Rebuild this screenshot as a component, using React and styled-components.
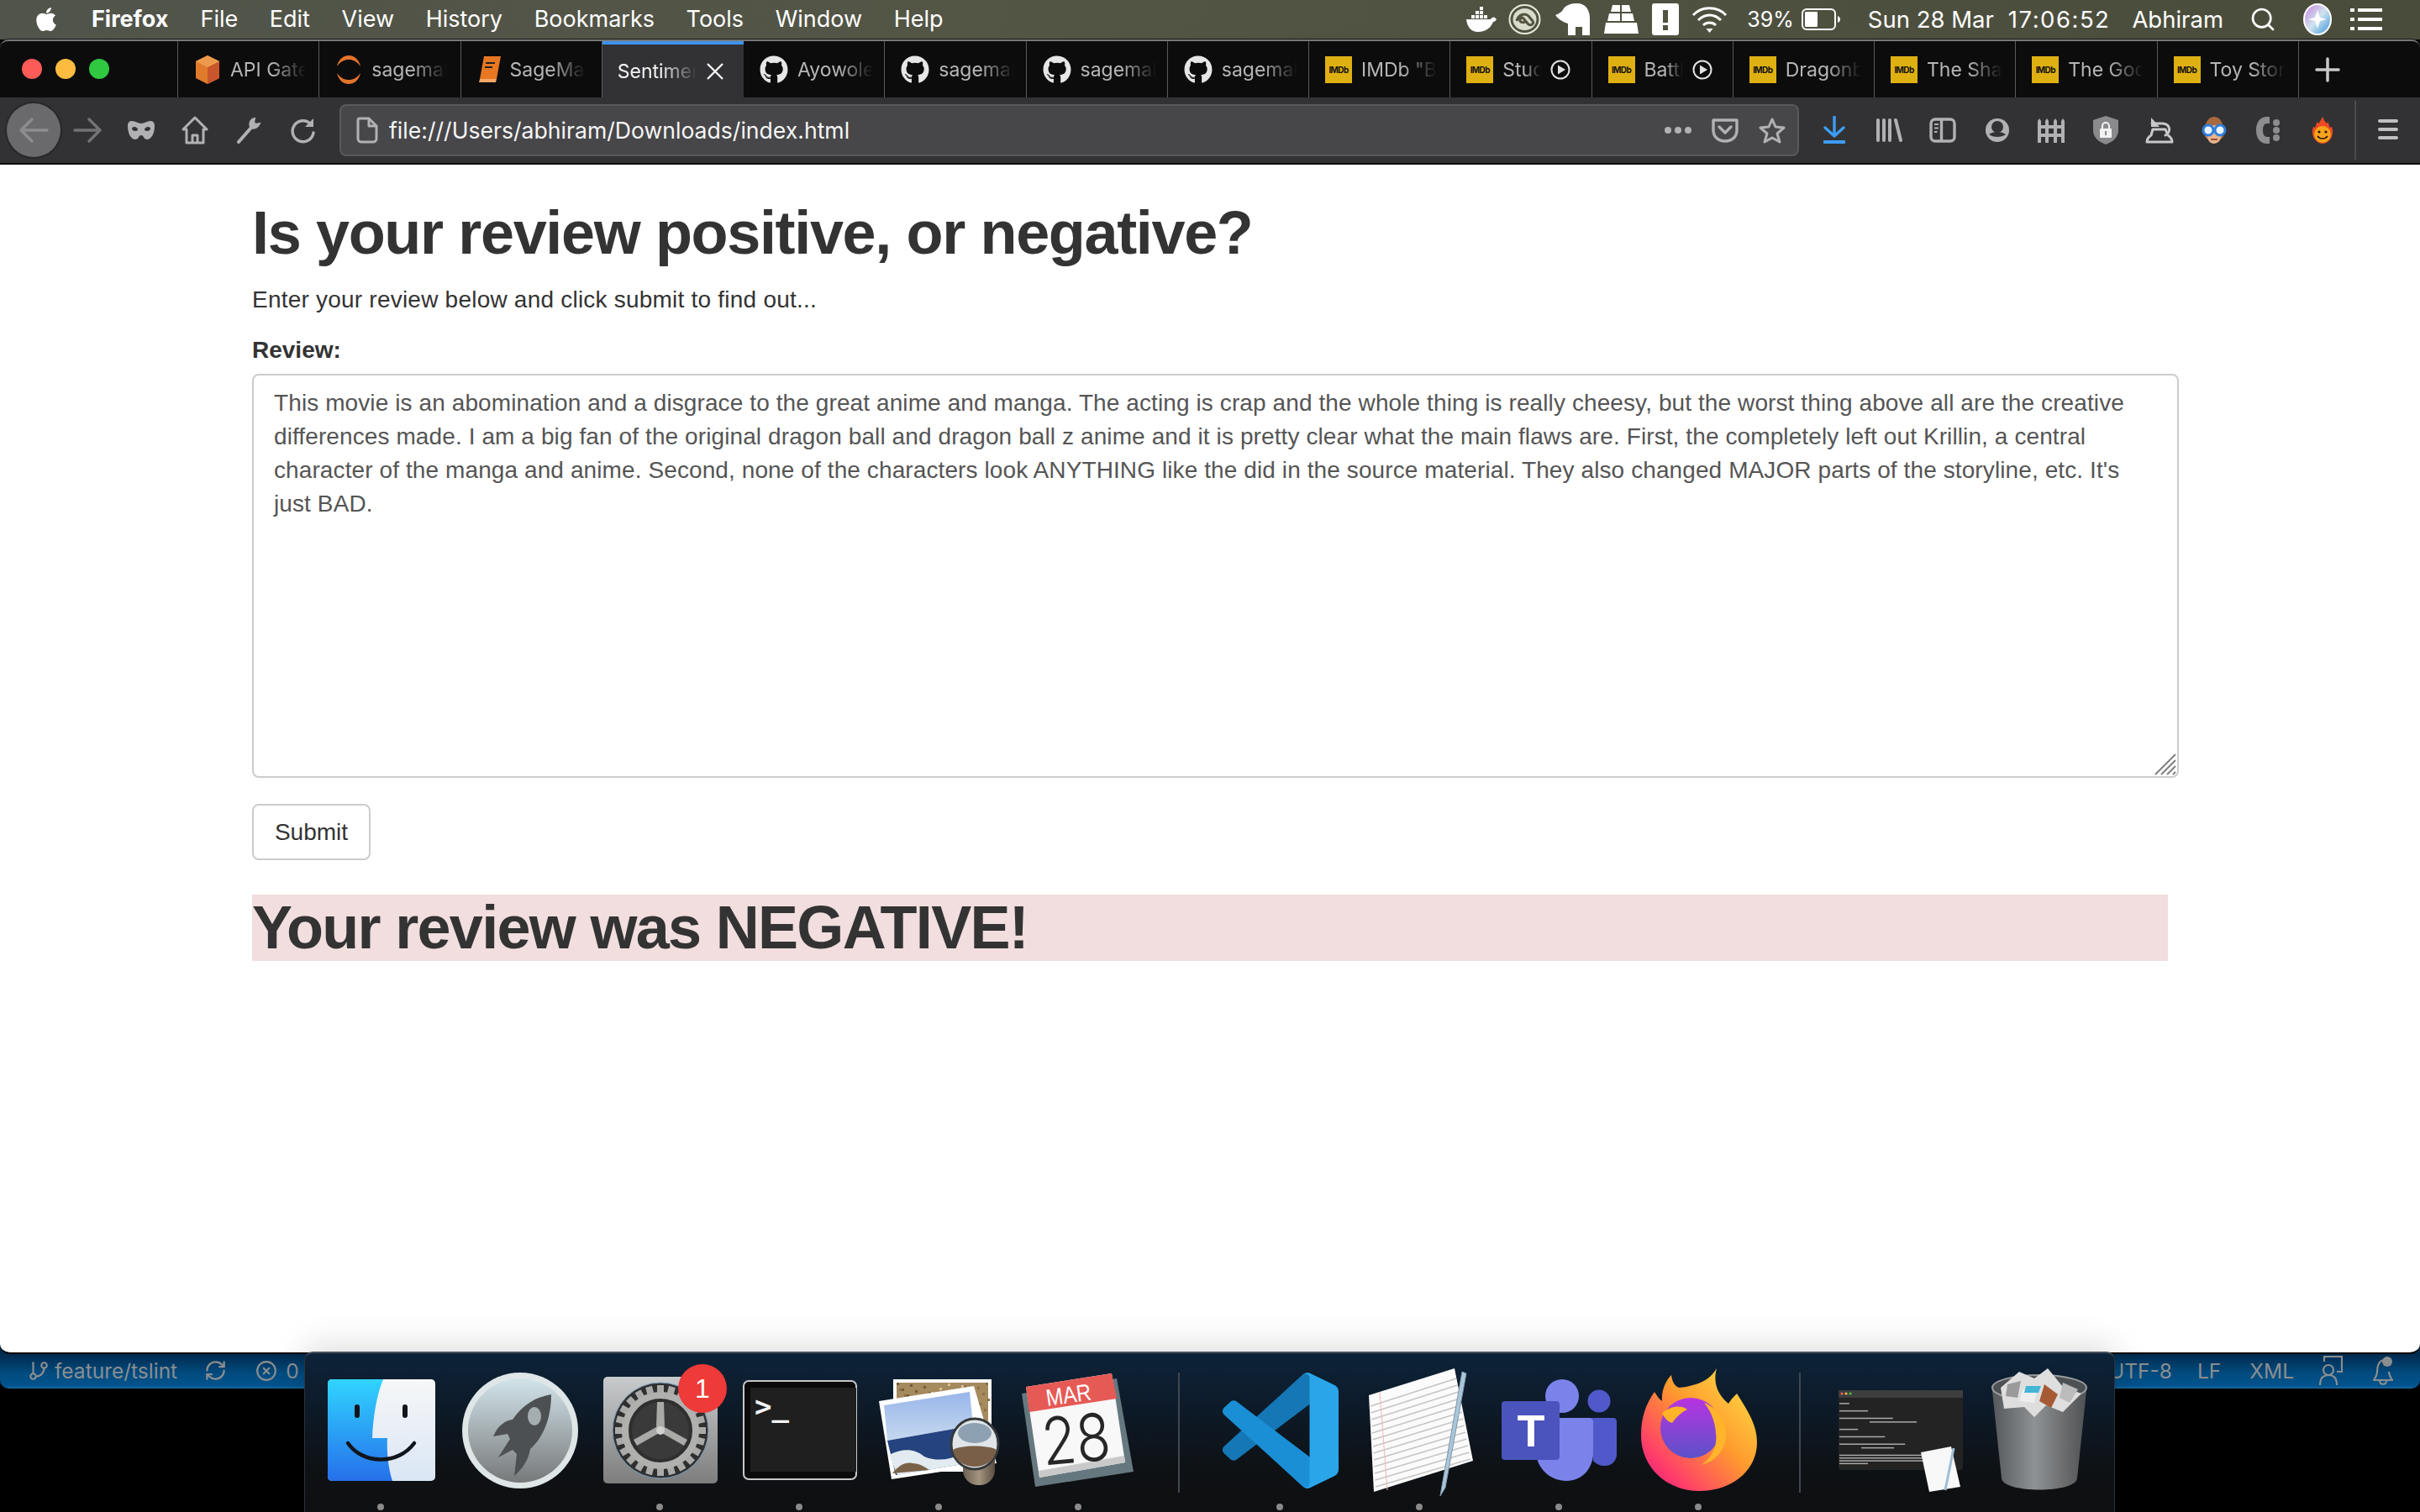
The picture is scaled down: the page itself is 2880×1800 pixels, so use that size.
import React from "react";
import styled, { createGlobalStyle } from "styled-components";
import { FaGithub, FaApple } from "react-icons/fa";
import { GitBranch, RefreshCw, CircleX, Search } from "lucide-react";

const GlobalStyle = createGlobalStyle`
  html, body { margin: 0; padding: 0; background: #000; }
  * { box-sizing: border-box; }
`;

const Screen = styled.div`
  width: 2880px;
  height: 1800px;
  background: #000;
  position: relative;
  overflow: hidden;
  display: flex;
  flex-direction: column;
  font-family: "Liberation Sans", Arial, sans-serif;
`;

/* mac menu bar */
const MenuBar = styled.div`
  height: 47px;
  flex: none;
  display: flex;
  align-items: center;
  padding: 0 45px 2px 39px;
  background: linear-gradient(90deg, #51544a 0%, #535544 45%, #4a4c3b 100%);
  color: #fff;
  font-family: Inter, "Liberation Sans", sans-serif;
  font-size: 27px;
`;
const MenuApp = styled.span`
  font-weight: 700;
  margin-left: 38px;
  margin-right: 38px;
`;
const MenuItem = styled.span`
  margin-right: 37.6px;
  white-space: nowrap;
`;
const MenuSpacer = styled.div`
  flex: 1;
`;
const Tray = styled.span`
  display: flex;
  align-items: center;
  margin-left: ${(p) => p.$ml || 0}px;
  white-space: nowrap;
  font-size: ${(p) => p.$size || 27.5}px;
  letter-spacing: ${(p) => p.$ls || 0}px;
`;

/* browser chrome */
const Chrome = styled.div`
  flex: none;
  border-top: 2px solid #777;
  border-radius: 10px 10px 0 0;
  background: #0c0c0d;
  box-shadow: 0 -1px 0 #1a1a1a;
`;
const TabStrip = styled.div`
  height: 67px;
  display: flex;
  align-items: stretch;
`;
const Lights = styled.div`
  width: 212px;
  display: flex;
  align-items: center;
  gap: 16px;
  padding: 0 0 2px 26px;
  border-right: 1px solid #5a5a5c;
`;
const Light = styled.span`
  width: 24px;
  height: 24px;
  border-radius: 50%;
  background: ${(p) => p.$c};
`;
const Tab = styled.div`
  width: 168.25px;
  flex: none;
  display: flex;
  align-items: center;
  gap: 11px;
  padding-left: ${(p) => (p.$active ? 18 : 19)}px;
  position: relative;
  background: ${(p) => (p.$active ? "#323234" : "transparent")};
  border-right: ${(p) => (p.$active ? "0" : "1px solid #5a5a5c")};
  border-top: ${(p) => (p.$active ? "4px solid #3d93f0" : "0")};
  color: ${(p) => (p.$active ? "#f4f4f4" : "#b6b6b8")};
  font-family: Inter, "Liberation Sans", sans-serif;
  font-size: 23px;
`;
const TabTitle = styled.span`
  width: ${(p) => p.$w || 88}px;
  overflow: hidden;
  white-space: nowrap;
  -webkit-mask-image: linear-gradient(90deg, #000 55%, transparent 100%);
  mask-image: linear-gradient(90deg, #000 55%, transparent 100%);
`;
const NewTab = styled.div`
  width: 68px;
  display: flex;
  align-items: center;
  justify-content: center;
`;
const Imdb = styled.span`
  width: 32px;
  height: 32px;
  flex: none;
  background: #dfb011;
  color: #111;
  font-size: 10px;
  font-weight: 700;
  display: flex;
  align-items: center;
  justify-content: center;
  letter-spacing: -0.6px;
`;

const Toolbar = styled.div`
  height: 80px;
  background: #323234;
  border-bottom: 2px solid #0c0c0d;
  display: flex;
  align-items: center;
  padding-left: 8px;
`;
const ToolSlot = styled.div`
  width: ${(p) => p.$w || 64}px;
  height: 64px;
  flex: none;
  display: flex;
  align-items: center;
  justify-content: center;
`;
const BackButton = styled.div`
  width: 64px;
  height: 64px;
  flex: none;
  border-radius: 50%;
  background: #6a6a6c;
  box-shadow: 0 0 0 2px #28282a;
  display: flex;
  align-items: center;
  justify-content: center;
`;
const UrlBar = styled.div`
  flex: 1;
  height: 62px;
  margin: 0 10px 0 12px;
  background: #474749;
  border: 2px solid #59595b;
  border-radius: 8px;
  display: flex;
  align-items: center;
  padding: 0 14px 0 18px;
  color: #f6f6f6;
  font-family: Inter, "Liberation Sans", sans-serif;
  font-size: 26.6px;
`;
const UrlText = styled.span`
  flex: 1;
  margin-left: 13px;
`;
const UrlActions = styled.div`
  display: flex;
  align-items: center;
  gap: 24px;
`;
const ToolDivider = styled.div`
  width: 2px;
  height: 70px;
  background: #4c4c4e;
  margin-left: 6px;
`;

/* the page itself */
const Page = styled.main`
  height: 1416px;
  flex: none;
  position: relative;
  z-index: 1;
  background: #fff;
  border-bottom: 2px solid #000;
  border-radius: 0 0 12px 12px;
  padding: 42px 0 0 300px;
  color: #333;
`;
const Title = styled.h1`
  margin: 0 0 20px;
  font-size: 72px;
  line-height: 79px;
  font-weight: 700;
  letter-spacing: ${(p) => p.$ls}px;
`;
const Lead = styled.p`
  margin: 0 0 20px;
  font-size: 28px;
  line-height: 40px;
  letter-spacing: 0.22px;
`;
const FieldLabel = styled.label`
  display: block;
  margin: 0 0 8px;
  font-size: 28px;
  line-height: 40px;
  font-weight: 700;
`;
const FieldWrap = styled.div`
  position: relative;
  width: 2293px;
  height: 481px;
  margin-bottom: 31px;
`;
const Review = styled.textarea`
  display: block;
  width: 100%;
  height: 100%;
  resize: none;
  outline: none;
  border: 2px solid #ccc;
  border-radius: 8px;
  padding: 13px 34px 13px 24px;
  background: #fff;
  color: #555;
  font-family: "Liberation Sans", Arial, sans-serif;
  font-size: 28px;
  line-height: 40px;
  letter-spacing: 0.1px;
  overflow: hidden;
`;
const Grip = styled.svg`
  position: absolute;
  right: 3px;
  bottom: 3px;
`;
const SubmitButton = styled.button`
  display: block;
  width: 141px;
  height: 67px;
  background: #fff;
  border: 2px solid #ccc;
  border-radius: 8px;
  color: #333;
  font-family: "Liberation Sans", Arial, sans-serif;
  font-size: 28px;
  padding: 0 0 0 0;
`;
const Result = styled(Title)`
  margin: 41px 0 0;
  width: 2280px;
  background: #f2dede;
`;

/* the editor's status bar peeking out behind the window */
const StatusBar = styled.div`
  flex: none;
  height: 53px;
  margin-top: -12px;
  padding: 12px 32px 2px 33px;
  border-radius: 0 0 10px 10px;
  background: linear-gradient(180deg, #012440 0%, #012c50 25%, #014a7e 65%, #01548e 95%, #1a6ca4 100%);
  color: #8a8e90;
  font-family: Inter, "Liberation Sans", sans-serif;
  font-size: 24.5px;
  display: flex;
  align-items: center;
`;
const StatusItem = styled.span`
  display: flex;
  align-items: center;
  gap: ${(p) => p.$gap || 10}px;
  margin-left: ${(p) => p.$ml || 0}px;
  white-space: nowrap;
`;
const StatusSpacer = styled.div`
  flex: 1;
`;

/* dock */
const Dock = styled.div`
  position: absolute;
  left: 362px;
  top: 1609px;
  width: 2155px;
  height: 191px;
  padding: 13px 0 0 7px;
  display: flex;
  z-index: 2;
  border-top: 2px solid #46525e;
  border-left: 1px solid #2c343c;
  border-right: 1px solid #2c343c;
  border-radius: 10px 10px 0 0;
  background: linear-gradient(180deg, #0d2339 0%, #0d1a28 35%, #0e1114 75%, #0e0f11 100%);
  box-shadow: 0 -6px 40px rgba(0, 0, 0, 0.14);
`;
const DockSlot = styled.div`
  width: 166px;
  flex: none;
  position: relative;
  display: flex;
  flex-direction: column;
  align-items: center;
`;
const RunDot = styled.span`
  width: 8px;
  height: 8px;
  margin-top: 6px;
  border-radius: 50%;
  background: ${(p) => (p.$on ? "#8a8a8a" : "transparent")};
`;
const DockSep = styled.div`
  width: ${(p) => p.$w}px;
  flex: none;
  display: flex;
  justify-content: center;
  &::after {
    content: "";
    width: 2px;
    height: 143px;
    margin-top: 10px;
    background: #3f4750;
  }
`;
const Badge = styled.span`
  position: absolute;
  left: 105px;
  top: 0;
  width: 58px;
  height: 58px;
  border-radius: 50%;
  background: #ee3a38;
  color: #fff;
  font-size: 32px;
  display: flex;
  align-items: center;
  justify-content: center;
`;

const Cube = () => (
  <svg width="32" height="34" viewBox="0 0 32 34">
    <path d="M16 0 30 7v20l-14 7L2 27V7z" fill="#e07b2c" />
    <path d="M16 14 30 7v20l-14 7z" fill="#c9562a" />
    <path d="M16 0 30 7 16 14 2 7z" fill="#ee9a4d" />
  </svg>
);
const SageRing = () => (
  <svg width="32" height="36" viewBox="0 0 32 36">
    <path d="M2 14C4 5 10 1 16 1s12 4 14 13C25 7 20 6 16 6S7 7 2 14z" fill="#e4732a" />
    <path d="M2 22c2 9 8 13 14 13s12-4 14-13c-5 7-10 8-14 8S7 29 2 22z" fill="#e4732a" />
  </svg>
);
const Book = () => (
  <svg width="28" height="32" viewBox="0 0 28 32">
    <path d="M8 0h20l-5 27H3z" fill="#e87722" />
    <path d="M3 27h20l-1 4H2z" fill="#f2a766" />
    <path d="M10 7h11v2H10zM9 12h9v2H9z" fill="#222" />
  </svg>
);
const PlayCircle = () => (
  <svg width="24" height="24" viewBox="0 0 24 24" fill="none">
    <circle cx="12" cy="12" r="10.5" stroke="#e2e2e2" strokeWidth="2" />
    <path d="M9 6.5 18 12l-9 5.5z" fill="#e2e2e2" />
  </svg>
);

const tabs = [
  { icon: <Cube />, title: "API Gate" },
  { icon: <SageRing />, title: "sagemal" },
  { icon: <Book />, title: "SageMa" },
  { title: "Sentimen", active: true },
  { git: true, title: "Ayowole" },
  { git: true, title: "sagemal" },
  { git: true, title: "sagemal" },
  { git: true, title: "sagemal" },
  { imdb: true, title: 'IMDb "B' },
  { imdb: true, title: "Stud", play: true },
  { imdb: true, title: "Battl", play: true },
  { imdb: true, title: "Dragonb" },
  { imdb: true, title: "The Sha" },
  { imdb: true, title: "The God" },
  { imdb: true, title: "Toy Stor" },
];

const ico = "#b1b1b3";

const reviewText =
  "This movie is an abomination and a disgrace to the great anime and manga. The acting is crap and the whole thing is really cheesy, but the worst thing above all are the creative differences made. I am a big fan of the original dragon ball and dragon ball z anime and it is pretty clear what the main flaws are. First, the completely left out Krillin, a central character of the manga and anime. Second, none of the characters look ANYTHING like the did in the source material. They also changed MAJOR parts of the storyline, etc. It's just BAD.";

function DockIcon({ children }) {
  return (
    <svg width="166" height="160" viewBox="0 0 166 160">
      {children}
    </svg>
  );
}

const Finder = () => (
  <DockIcon>
    <defs>
      <linearGradient id="fa" x1="0" y1="0" x2="0" y2="1">
        <stop offset="0" stopColor="#30d4ff" />
        <stop offset="1" stopColor="#2670ea" />
      </linearGradient>
      <linearGradient id="fb" x1="0" y1="0" x2="0" y2="1">
        <stop offset="0" stopColor="#f6f7f8" />
        <stop offset="1" stopColor="#dae6f4" />
      </linearGradient>
    </defs>
    <rect x="20" y="18" width="128" height="121" rx="5" fill="url(#fb)" />
    <path d="M25 18h61c-8 20-12 45-13 70h18c-1 16 1 36 6 51H25a5 5 0 0 1-5-5V23a5 5 0 0 1 5-5z" fill="url(#fa)" />
    <rect x="52" y="48" width="6" height="16" rx="3" fill="#10151c" />
    <rect x="109" y="48" width="6" height="16" rx="3" fill="#10151c" />
    <path d="M44 94C62 120 104 120 123 94" fill="none" stroke="#10151c" strokeWidth="4.5" strokeLinecap="round" />
  </DockIcon>
);

const Launchpad = () => (
  <DockIcon>
    <defs>
      <linearGradient id="la" x1="0" y1="0" x2="0" y2="1">
        <stop offset="0" stopColor="#d2e4ea" />
        <stop offset="1" stopColor="#77797a" />
      </linearGradient>
    </defs>
    <circle cx="83" cy="79" r="69" fill="#dfe6e8" />
    <circle cx="83" cy="79" r="62" fill="url(#la)" />
    <path d="M120 36c-18 3-34 12-46 30-8 1-17 6-23 20l17-3 3 6-14 22 17-9 5 5-3 26c8-7 17-18 19-32 15-13 25-36 25-65z" fill="#4d5052" />
    <ellipse cx="100" cy="62" rx="8" ry="11" fill="#a4adb0" />
  </DockIcon>
);

const gearTeeth = Array.from({ length: 24 }, (_, i) => i * 15);
const SysPrefs = () => (
  <DockIcon>
    <defs>
      <linearGradient id="sa" x1="0" y1="0" x2="0" y2="1">
        <stop offset="0" stopColor="#c8cbcd" />
        <stop offset="1" stopColor="#7d7d7d" />
      </linearGradient>
    </defs>
    <rect x="16" y="15" width="136" height="127" rx="5" fill="url(#sa)" />
    <circle cx="84" cy="79" r="57" fill="#2f2f30" stroke="#7fa3bd" strokeWidth="1" />
    {gearTeeth.map((a) => (
      <rect key={a} x="80" y="25" width="8" height="14" fill="#aaaaa8" transform={`rotate(${a} 84 79)`} />
    ))}
    <circle cx="84" cy="79" r="42" fill="none" stroke="#b0b0ae" strokeWidth="8" />
    <circle cx="84" cy="79" r="34" fill="#3a3a3b" />
    <path d="M80 45h8l1 30 27 15-4 7-28-16-28 16-4-7 27-15z" fill="#a9a9a7" />
    <circle cx="84" cy="79" r="5" fill="#d0d0ce" />
  </DockIcon>
);

const Terminal = () => (
  <DockIcon>
    <rect x="17" y="20" width="134" height="117" rx="6" fill="#0a0a0a" stroke="#c8c8c8" strokeWidth="2" />
    <rect x="25" y="28" width="126" height="100" fill="#1f1f1f" />
    <text x="30" y="62" fill="#f5f5f5" fontFamily="'DejaVu Sans Mono', monospace" fontWeight="700" fontSize="34">
      {">_"}
    </text>
  </DockIcon>
);

const speckles = Array.from({ length: 70 }, (_, i) => ({
  x: 33 + ((i * 37) % 109),
  y: 22 + ((i * 23) % 50),
  c: i % 3 === 0 ? "#6f5a3a" : i % 3 === 1 ? "#d6bf93" : "#8a7048",
}));
const Preview = () => (
  <DockIcon>
    <defs>
      <linearGradient id="pa" x1="0" y1="0" x2="0" y2="1">
        <stop offset="0" stopColor="#98b6ea" />
        <stop offset="1" stopColor="#c6d8ef" />
      </linearGradient>
      <linearGradient id="pb" x1="0" y1="0" x2="1" y2="0">
        <stop offset="0" stopColor="#6c6052" />
        <stop offset="0.5" stopColor="#a39480" />
        <stop offset="1" stopColor="#5a4e42" />
      </linearGradient>
    </defs>
    <rect x="29" y="18" width="117" height="110" fill="#fff" />
    <rect x="33" y="22" width="109" height="100" fill="#a58a5e" />
    {speckles.map((s, i) => (
      <rect key={i} x={s.x} y={s.y} width="3" height="3" fill={s.c} />
    ))}
    <path d="M12 44 125 26l27 92-125 19z" fill="#fff" />
    <path d="M18 49 120 33l4 40-102 18z" fill="url(#pa)" />
    <path d="M22 91 124 73l12 42-104 17z" fill="#25437f" />
    <path d="M24 108c16-8 30-8 42 2 14 6 30 4 42-2l22 8-96 16z" fill="#e2ebf0" />
    <path d="M28 130c8-10 16-14 24-12 8 0 14 4 20 8z" fill="#7a6248" />
    <rect x="112" y="92" width="38" height="52" rx="18" fill="url(#pb)" />
    <ellipse cx="126" cy="95" rx="28" ry="30" fill="#dfe5e8" stroke="#34383b" strokeWidth="3" />
    <path d="M100 102c8-6 44-6 52 0-2 12-12 20-26 20s-24-8-26-20z" fill="#7a5f48" />
    <ellipse cx="126" cy="82" rx="20" ry="12" fill="#8ea1b2" />
  </DockIcon>
);

const Calendar = () => (
  <DockIcon>
    <path d="M16 35 129 17l20 111-117 18z" fill="#66787f" />
    <path d="M21 27 123 11l16 106-102 18z" fill="#f8f8f8" />
    <path d="M37 135 139 117l-1-8-102 18z" fill="#c9c9c9" />
    <path d="M21 27 123 11l6 30L25 57z" fill="#e65a56" />
    <text x="73" y="46" textAnchor="middle" fill="#fff" fontFamily="'Liberation Sans', sans-serif" fontSize="28" textLength="54" lengthAdjust="spacingAndGlyphs" transform="rotate(-8 73 46)">
      MAR
    </text>
    <text x="83" y="117" textAnchor="middle" fill="#262626" fontFamily="Inter, sans-serif" fontWeight="300" fontSize="78" textLength="82" lengthAdjust="spacingAndGlyphs" transform="rotate(-5 83 117)">
      28
    </text>
  </DockIcon>
);

const VsCode = () => (
  <DockIcon>
    <g transform="translate(15 10) scale(1.38)">
      <path d="M96.46 10.8 75.86.88C73.47-.27 70.62.21 68.75 2.08L1.3 63.58c-1.81 1.66-1.81 4.51 0 6.16l5.51 5.01c1.49 1.35 3.72 1.45 5.32.24L93.36 13.37C96.09 11.3 100 13.25 100 16.67v-.24c0-2.4-1.38-4.59-3.54-5.63z" fill="#1577b5" />
      <path d="M96.46 89.2 75.86 99.12c-2.39 1.15-5.24.67-7.11-1.2L1.3 36.42c-1.81-1.66-1.81-4.51 0-6.16l5.51-5.01c1.49-1.35 3.72-1.45 5.32-.24l81.23 61.62c2.73 2.07 6.64.12 6.64-3.3v.24c0 2.4-1.38 4.59-3.54 5.63z" fill="#1a8fd6" />
      <path d="M75.86 99.13c-2.39 1.15-5.24.66-7.11-1.21C71.06 100.22 75 98.59 75 95.33V4.67c0-3.26-3.94-4.89-6.25-2.59C70.62.21 73.47-.27 75.86.87l20.6 9.91C98.62 11.82 100 14.01 100 16.41v67.18c0 2.4-1.38 4.59-3.54 5.63z" fill="#2aa5ea" />
    </g>
  </DockIcon>
);

const TextEdit = () => (
  <DockIcon>
    <path d="M23 37 125 5l22 110-118 37z" fill="#fbfbfb" />
    {Array.from({ length: 13 }, (_, i) => i).map((i) => (
      <path key={i} d={`M${25 + i * 0.5} ${50 + i * 8} ${127 + i * 1.4} ${17 + i * 8}`} stroke="#c4c4c4" strokeWidth="1.4" />
    ))}
    <path d="M36 33 45 150" stroke="#f3b8b8" strokeWidth="1" />
    <path d="M134 9 110 145l-2 12 6-10 25-136z" fill="#a9c6da" stroke="#7f97a8" strokeWidth="1" />
  </DockIcon>
);

const Teams = () => (
  <DockIcon>
    <circle cx="87" cy="38" r="20" fill="#7b83eb" />
    <circle cx="131" cy="44" r="13.5" fill="#5059c9" />
    <path d="M118 64h30c3 0 4 2 4 5v38c0 8-6 14-14 14-6 0-10-2-14-6z" fill="#5059c9" />
    <path d="M62 64h56c4 0 6 2 6 5v36c0 19-13 34-32 34-18 0-36-14-36-36z" fill="#7b83eb" />
    <rect x="15" y="44" width="69" height="70" rx="4" fill="#4b53bc" />
    <text x="50" y="98" textAnchor="middle" fill="#fff" fontFamily="'Liberation Sans', sans-serif" fontWeight="700" fontSize="54">
      T
    </text>
  </DockIcon>
);

const Firefox = () => (
  <DockIcon>
    <defs>
      <linearGradient id="xa" x1="1" y1="0" x2="0" y2="1">
        <stop offset="0" stopColor="#ffe847" />
        <stop offset="0.45" stopColor="#ff9a2e" />
        <stop offset="0.8" stopColor="#ff3d6a" />
        <stop offset="1" stopColor="#e31587" />
      </linearGradient>
      <linearGradient id="xb" x1="0.5" y1="0" x2="0.5" y2="1">
        <stop offset="0" stopColor="#b833e1" />
        <stop offset="1" stopColor="#5b52c8" />
      </linearGradient>
    </defs>
    <path d="M105 5c-5 18 2 32 14 42 4-6 6-8 10-12 14 22 24 38 24 58 0 34-30 58-69 58-38 0-69-28-69-66 0-22 6-38 16-52 3 5 6 9 9 11-1-12 4-24 11-31 1 8 4 13 9 15 18-2 36-7 45-23z" fill="url(#xa)" />
    <circle cx="74" cy="76" r="36" fill="url(#xb)" />
    <path d="M40 58c10-8 22-10 30-4-8 4-14 10-18 16-6-2-9-6-12-12z" fill="#ffb326" />
    <path d="M90 46c16 6 26 22 26 38 0 18-12 32-30 36 14-9 20-22 18-38-1-14-6-26-14-36z" fill="#ffb42c" />
  </DockIcon>
);

const thumbLines = [
  [14, 22, 14], [14, 38, 40], [14, 54, 75], [50, 62, 66], [14, 78, 26], [14, 94, 64], [14, 110, 92],
  [40, 118, 46], [14, 134, 140], [14, 140, 135], [14, 146, 138], [14, 152, 40],
];
const DocThumb = () => (
  <DockIcon>
    <rect x="9" y="31" width="148" height="95" rx="3" fill="#232323" />
    <rect x="9" y="31" width="148" height="9" fill="#3d3d3d" />
    <circle cx="13" cy="35" r="1.6" fill="#ee5f58" />
    <circle cx="18" cy="35" r="1.6" fill="#f6bd3a" />
    <circle cx="23" cy="35" r="1.6" fill="#3fc94e" />
    {thumbLines.map(([x, y, w]) => (
      <rect key={y} x={x - 4} y={34 + y * 0.55} width={w * 0.85} height="1.5" fill="#a9a9a9" />
    ))}
    <path d="M107 105 143 98l11 48-37 6z" fill="#f8f8f8" />
    <path d="M146 100 136 150" stroke="#9fbfd6" strokeWidth="3" />
  </DockIcon>
);

const Trash = () => (
  <DockIcon>
    <defs>
      <linearGradient id="ta" x1="0" y1="0" x2="1" y2="0">
        <stop offset="0" stopColor="#55585a" />
        <stop offset="0.45" stopColor="#8f9294" />
        <stop offset="1" stopColor="#4f5153" />
      </linearGradient>
    </defs>
    <path d="M26 32c0-10 112-10 112 0l-11 104c-2 18-88 18-90 0z" fill="url(#ta)" />
    <ellipse cx="82" cy="28" rx="56" ry="15" fill="#4e5153" stroke="#9a9da0" strokeWidth="2" />
    <path d="M36 28 58 9l18 8 16-12 18 22 22 8-22 22-20-8-14 14-12-12-24 2z" fill="#dedede" />
    <path d="M62 30 80 26 76 46 58 44z" fill="#eee" />
    <path d="M66 26h18l-3 8H64z" fill="#45b5d6" />
    <path d="M88 24 104 36 96 52 82 44z" fill="#a65a33" />
    <path d="M44 24 60 20 56 40 42 38z" fill="#9a9a9a" />
    <path d="M110 22 128 30 118 46 106 40z" fill="#bcbcbc" />
  </DockIcon>
);

function App() {
  return (
    <Screen>
      <GlobalStyle />
      <MenuBar>
        <FaApple size={32} color="#fff" />
        <MenuApp>Firefox</MenuApp>
        <MenuItem>File</MenuItem>
        <MenuItem>Edit</MenuItem>
        <MenuItem>View</MenuItem>
        <MenuItem>History</MenuItem>
        <MenuItem>Bookmarks</MenuItem>
        <MenuItem>Tools</MenuItem>
        <MenuItem>Window</MenuItem>
        <MenuItem>Help</MenuItem>
        <MenuSpacer />
        <Tray>
          <svg width="36" height="30" viewBox="0 0 36 30" fill="#fff">
            <path d="M16 0h4v4h-4zM11 5h4v4h-4zM16 5h4v4h-4zM6 10h4v4H6zM11 10h4v4h-4zM16 10h4v4h-4zM21 10h4v4h-4z" />
            <path d="M0 15h29c1-2 3-3 5-2l2 2c-1 2-3 3-4 3-3 8-10 12-18 12C6 30 1 24 0 15z" />
          </svg>
        </Tray>
        <Tray $ml={14}>
          <svg width="39" height="36" viewBox="0 0 39 36" fill="none">
            <ellipse cx="19.5" cy="18" rx="18" ry="17" stroke="#e8e8dc" strokeWidth="2" />
            <ellipse cx="19.5" cy="18" rx="14" ry="13" fill="#d9dbcc" />
            <path d="M10 20c2-8 10-10 14-6l5 6c2 3-2 6-5 4l-6-7c-2-2-5 0-4 3 1 2 5 2 6 1" stroke="#52543f" strokeWidth="3" />
          </svg>
        </Tray>
        <Tray $ml={17}>
          <svg width="41" height="38" viewBox="0 0 41 38" fill="#fff">
            <path d="M0 14c5-2 8-4 10-8 4-5 10-6 16-6 10 0 15 8 15 18v20h-9V28h-8v10h-9V24C8 22 3 18 0 14z" />
          </svg>
        </Tray>
        <Tray $ml={17}>
          <svg width="41" height="34" viewBox="0 0 41 34" fill="#fff">
            <path d="M10 0h9v8H8zM21 0h9l2 8H21zM6 10h13v9H4zM21 10h13l2 9H21zM2 21h37l2 13H0z" />
          </svg>
        </Tray>
        <Tray $ml={16}>
          <svg width="32" height="38" viewBox="0 0 32 38">
            <rect width="32" height="38" rx="3" fill="#fff" />
            <rect x="13" y="8" width="6" height="15" fill="#52543f" />
            <rect x="13" y="26" width="6" height="6" fill="#52543f" />
          </svg>
        </Tray>
        <Tray $ml={15}>
          <svg width="43" height="32" viewBox="0 0 43 32" fill="none" stroke="#fff" strokeWidth="3">
            <path d="M2 11C12 0 31 0 41 11" />
            <path d="M8 17c8-8 19-8 27 0" />
            <path d="M14 23c4-4 11-4 15 0" />
            <path d="M21.5 32l-4-5h8z" fill="#fff" stroke="none" />
          </svg>
        </Tray>
        <Tray $ml={23} $size={25}>39%</Tray>
        <Tray $ml={9}>
          <svg width="46" height="26" viewBox="0 0 46 26" fill="none">
            <rect x="1" y="1" width="39" height="24" rx="5" stroke="#fff" strokeWidth="2" />
            <rect x="4" y="4" width="15" height="18" rx="1" fill="#fff" />
            <path d="M43 9c2 1 3 2 3 4s-1 3-3 4z" fill="#fff" />
          </svg>
        </Tray>
        <Tray $ml={33}>Sun 28 Mar</Tray>
        <Tray $ml={17} $ls={1.5}>17:06:52</Tray>
        <Tray $ml={26}>Abhiram</Tray>
        <Tray $ml={31}>
          <Search size={32} color="#fff" strokeWidth={2} />
        </Tray>
        <Tray $ml={32}>
          <svg width="34" height="38" viewBox="0 0 34 38">
            <defs>
              <linearGradient id="si" x1="0" y1="0" x2="1" y2="1">
                <stop offset="0" stopColor="#c97be0" />
                <stop offset="0.5" stopColor="#cfe4ef" />
                <stop offset="1" stopColor="#2f8fd8" />
              </linearGradient>
            </defs>
            <ellipse cx="17" cy="19" rx="16" ry="18" fill="url(#si)" stroke="#fff" strokeWidth="2" />
            <path d="M17 8l3 9 8 2-8 2-3 9-3-9-8-2 8-2z" fill="#fff" />
          </svg>
        </Tray>
        <Tray $ml={22}>
          <svg width="38" height="26" viewBox="0 0 38 26" fill="#fff">
            <path d="M0 0h5v4H0zM9 0h29v4H9zM0 11h5v4H0zM9 11h29v4H9zM0 22h5v4H0zM9 22h29v4H9z" />
          </svg>
        </Tray>
      </MenuBar>

      <Chrome>
        <TabStrip>
          <Lights>
            <Light $c="#fc5b57" />
            <Light $c="#fdbc40" />
            <Light $c="#2fc840" />
          </Lights>
          {tabs.map((t, i) => (
            <Tab key={i} $active={t.active}>
              {t.icon}
              {t.git && <FaGithub size={34} color="#e6e6e6" style={{ flex: "none" }} />}
              {t.imdb && <Imdb>IMDb</Imdb>}
              <TabTitle $w={t.play ? 46 : t.active ? 94 : 90}>{t.title}</TabTitle>
              {t.play && <PlayCircle />}
              {t.active && (
                <svg width="22" height="22" viewBox="0 0 22 22" stroke="#f4f4f4" strokeWidth="2.4">
                  <path d="M2 2l18 18M20 2 2 20" />
                </svg>
              )}
            </Tab>
          ))}
          <NewTab>
            <svg width="30" height="30" viewBox="0 0 30 30" stroke="#c8c8c8" strokeWidth="3.5" strokeLinecap="round">
              <path d="M15 2v26M2 15h26" />
            </svg>
          </NewTab>
        </TabStrip>

        <Toolbar>
          <BackButton>
            <svg width="36" height="32" viewBox="0 0 36 32" fill="none" stroke="#8d8d8f" strokeWidth="3.4" strokeLinecap="round" strokeLinejoin="round">
              <path d="M34 16H3M16 3 3 16l13 13" />
            </svg>
          </BackButton>
          <ToolSlot>
            <svg width="34" height="32" viewBox="0 0 34 32" fill="none" stroke="#737375" strokeWidth="3.4" strokeLinecap="round" strokeLinejoin="round">
              <path d="M2 16h30M19 3l13 13-13 13" />
            </svg>
          </ToolSlot>
          <ToolSlot>
            <svg width="32" height="22" viewBox="0 0 32 22" fill={ico}>
              <path fillRule="evenodd" d="M5 0c4 0 7 3 11 3s7-3 11-3c3 0 5 2 5 6 0 9-4 16-9 16-4 0-4-5-7-5s-3 5-7 5c-5 0-9-7-9-16 0-4 2-6 5-6zm3 7c-2 0-3 1-3 2 0 2 2 3 4 3s3-1 3-2-2-3-4-3zm16 0c-2 0-4 2-4 3s1 2 3 2 4-1 4-3c0-1-1-2-3-2z" />
            </svg>
          </ToolSlot>
          <ToolSlot>
            <svg width="32" height="34" viewBox="0 0 32 34" fill="none" stroke={ico} strokeWidth="3" strokeLinejoin="round">
              <path d="M2 16 16 2l14 14h-4v16H6V16z" />
              <path d="M13 32v-9h6v9" />
            </svg>
          </ToolSlot>
          <ToolSlot>
            <svg width="30" height="32" viewBox="0 0 30 32" fill="none" stroke={ico} strokeWidth="4" strokeLinecap="round">
              <path d="M3 30 17 14" />
              <path d="M22 2c-5 1-7 6-5 11 4 2 9 0 11-5l-5 1-2-3z" fill={ico} strokeWidth="2" />
            </svg>
          </ToolSlot>
          <ToolSlot>
            <svg width="30" height="32" viewBox="0 0 30 32" fill="none" stroke={ico} strokeWidth="3.4" strokeLinecap="round">
              <path d="M25 9A12.5 12.5 0 1 0 28 19" />
              <path d="M28 2v10H18z" fill={ico} stroke="none" />
            </svg>
          </ToolSlot>
          <UrlBar>
            <svg width="26" height="32" viewBox="0 0 26 32" fill="none" stroke={ico} strokeWidth="3" strokeLinejoin="round">
              <path d="M4 2h11l9 9v15a4 4 0 0 1-4 4H6a4 4 0 0 1-4-4V4a2 2 0 0 1 2-2z" />
              <path d="M15 2v9h9" />
            </svg>
            <UrlText>file:///Users/abhiram/Downloads/index.html</UrlText>
            <UrlActions>
              <svg width="32" height="8" viewBox="0 0 32 8" fill={ico}>
                <circle cx="4" cy="4" r="4" />
                <circle cx="16" cy="4" r="4" />
                <circle cx="28" cy="4" r="4" />
              </svg>
              <svg width="32" height="30" viewBox="0 0 32 30" fill="none" stroke={ico} strokeWidth="3.4" strokeLinejoin="round">
                <path d="M2 3h28v12c0 8-6 13-14 13S2 23 2 15z" />
                <path d="M9 11l7 7 7-7" strokeLinecap="round" />
              </svg>
              <svg width="32" height="32" viewBox="0 0 32 32" fill="none" stroke={ico} strokeWidth="3" strokeLinejoin="round">
                <path d="M16 3l4 9 10 1-8 7 3 10-9-5-9 5 3-10-8-7 10-1z" />
              </svg>
            </UrlActions>
          </UrlBar>
          <ToolSlot $w={64.5}>
            <svg width="26" height="34" viewBox="0 0 26 34" fill="none" stroke="#3d9df5" strokeWidth="3.4" strokeLinecap="round" strokeLinejoin="round">
              <path d="M13 1v23M2 14l11 10 11-10" />
              <path d="M1 31h24" strokeWidth="4" />
            </svg>
          </ToolSlot>
          <ToolSlot $w={64.5}>
            <svg width="32" height="30" viewBox="0 0 32 30" stroke={ico} strokeWidth="4" strokeLinecap="round">
              <path d="M3 3v24M10 3v24M17 3v24M24 3l6 24" />
            </svg>
          </ToolSlot>
          <ToolSlot $w={64.5}>
            <svg width="32" height="30" viewBox="0 0 32 30" fill="none" stroke={ico} strokeWidth="3.4">
              <rect x="2" y="2" width="28" height="26" rx="5" />
              <path d="M14.5 2v26" />
              <path d="M6 8h5M6 12.5h5M6 17h3.5" strokeWidth="2" />
            </svg>
          </ToolSlot>
          <ToolSlot $w={64.5}>
            <svg width="30" height="30" viewBox="0 0 30 30">
              <circle cx="15" cy="15" r="14" fill={ico} />
              <circle cx="15" cy="11" r="7" fill="#323234" />
              <path d="M5 20c5 4 15 4 20 0-5-4-15-4-20 0z" fill="#323234" />
            </svg>
          </ToolSlot>
          <ToolSlot $w={64.5}>
            <svg width="32" height="30" viewBox="0 0 32 30" fill={ico}>
              <path d="M0 4 2 1l2 3v26H0zM9 4l2-3 2 3v26H9zM19 4l2-3 2 3v26h-4zM28 4l2-3 2 3v26h-4z" />
              <path d="M0 9h32v4H0zM0 19h32v4H0z" />
            </svg>
          </ToolSlot>
          <ToolSlot $w={64.5}>
            <svg width="30" height="34" viewBox="0 0 30 34">
              <path d="M15 0 30 5v12c0 9-7 14-15 17C7 31 0 26 0 17V5z" fill="#8a8a8c" />
              <rect x="8" y="15" width="14" height="11" rx="1" fill="#f2f2f2" />
              <path d="M11 15v-3a4 4 0 0 1 8 0v3" fill="none" stroke="#f2f2f2" strokeWidth="2" />
              <rect x="14" y="18" width="2" height="5" fill="#8a8a8c" />
            </svg>
          </ToolSlot>
          <ToolSlot $w={64.5}>
            <svg width="34" height="32" viewBox="0 0 34 32" fill="none" stroke="#c8c8ca" strokeWidth="3" strokeLinejoin="round" strokeLinecap="round">
              <path d="M8 8h12c7 0 10 5 8 10-1 2-2 3-4 4" />
              <path d="M7 1v11h10z" fill="#c8c8ca" stroke="none" />
              <path d="M9 15h15l3 7c3 2 5 4 5 8H2c0-4 2-6 5-8z" />
            </svg>
          </ToolSlot>
          <ToolSlot $w={64.5}>
            <svg width="30" height="32" viewBox="0 0 30 32">
              <path d="M4 24C2 8 8 0 15 0s13 8 11 24l-5 4H9z" fill="#a8693f" />
              <ellipse cx="15" cy="21" rx="9" ry="11" fill="#e8b48c" />
              <circle cx="8" cy="16" r="6" fill="#eaf4ff" stroke="#2f7fdc" strokeWidth="3" />
              <circle cx="22" cy="16" r="6" fill="#eaf4ff" stroke="#2f7fdc" strokeWidth="3" />
              <path d="M11 27h8" stroke="#a04d3a" strokeWidth="2" />
            </svg>
          </ToolSlot>
          <ToolSlot $w={64.5}>
            <svg width="30" height="32" viewBox="0 0 30 32" fill="none">
              <path d="M17 4h-3C8 4 5 9 5 16s3 12 9 12h3" stroke="#8d8d8f" strokeWidth="8" />
              <circle cx="25" cy="7" r="4" fill="#8d8d8f" />
              <circle cx="25" cy="16" r="4" fill="#8d8d8f" />
              <circle cx="25" cy="25" r="4" fill="#8d8d8f" />
            </svg>
          </ToolSlot>
          <ToolSlot $w={64.5}>
            <svg width="24" height="32" viewBox="0 0 24 32">
              <path d="M12 0c2 4 3 6 5 8l2-2c0 3 1 5 2 7l2-1c2 5 1 12-2 15-2 3-6 5-9 5s-7-2-9-5C0 24-1 17 1 12l2 1c1-2 2-4 2-7l2 2c2-2 3-4 5-8z" fill="#ef4a21" />
              <circle cx="12" cy="21" r="10" fill="#f7a41c" />
              <circle cx="8" cy="18" r="1.6" fill="#2c1505" />
              <circle cx="16" cy="18" r="1.6" fill="#2c1505" />
              <path d="M6 23c3 4 9 4 12 0" fill="none" stroke="#2c1505" strokeWidth="1.6" />
            </svg>
          </ToolSlot>
          <ToolDivider />
          <ToolSlot $w={76}>
            <svg width="24" height="26" viewBox="0 0 24 26" fill="#c0c0c2">
              <rect width="24" height="4" rx="2" />
              <rect y="10" width="24" height="4" rx="2" />
              <rect y="20" width="24" height="4" rx="2" />
            </svg>
          </ToolSlot>
        </Toolbar>
      </Chrome>

      <Page>
        <Title $ls={-1.35}>Is your review positive, or negative?</Title>
        <Lead>Enter your review below and click submit to find out...</Lead>
        <FieldLabel htmlFor="review">Review:</FieldLabel>
        <FieldWrap>
          <Review id="review" readOnly value={reviewText} />
          <Grip width="26" height="26" viewBox="0 0 26 26" stroke="#808080" strokeWidth="2">
            <path d="M1 25 25 1M8 25 25 8M15 25 25 15M22 25l3-3" />
          </Grip>
        </FieldWrap>
        <SubmitButton type="button">Submit</SubmitButton>
        <Result as="h1" $ls={-1.7}>Your review was NEGATIVE!</Result>
      </Page>

      <StatusBar>
        <StatusItem $gap={6}>
          <GitBranch size={26} strokeWidth={2} />
          feature/tslint
        </StatusItem>
        <StatusItem $ml={32}>
          <RefreshCw size={27} strokeWidth={2} />
        </StatusItem>
        <StatusItem $ml={34}>
          <CircleX size={26} strokeWidth={2} />0
        </StatusItem>
        <StatusSpacer />
        <StatusItem>UTF-8</StatusItem>
        <StatusItem $ml={30}>LF</StatusItem>
        <StatusItem $ml={34}>XML</StatusItem>
        <StatusItem $ml={30}>
          <svg width="28" height="38" viewBox="0 0 28 38" fill="none" stroke="#8a8e90" strokeWidth="2.2">
            <path d="M6 8V2h21v18h-6" />
            <circle cx="11" cy="18" r="6" />
            <path d="M1 36c0-9 4-12 10-12s10 3 10 12" />
          </svg>
        </StatusItem>
        <StatusItem $ml={36}>
          <svg width="24" height="38" viewBox="0 0 24 38" fill="none" stroke="#8a8e90" strokeWidth="2.2">
            <path d="M12 6C6 8 5 14 5 20c0 4-2 7-4 10h22c-2-3-4-6-4-10" />
            <path d="M8 31c0 5 8 5 8 0" />
            <circle cx="17" cy="8" r="6" fill="#8a8e90" stroke="none" />
          </svg>
        </StatusItem>
      </StatusBar>

      <Dock>
        <DockSlot><Finder /><RunDot $on /></DockSlot>
        <DockSlot><Launchpad /><RunDot /></DockSlot>
        <DockSlot><SysPrefs /><Badge>1</Badge><RunDot $on /></DockSlot>
        <DockSlot><Terminal /><RunDot $on /></DockSlot>
        <DockSlot><Preview /><RunDot $on /></DockSlot>
        <DockSlot><Calendar /><RunDot $on /></DockSlot>
        <DockSep $w={74} />
        <DockSlot><VsCode /><RunDot $on /></DockSlot>
        <DockSlot><TextEdit /><RunDot $on /></DockSlot>
        <DockSlot><Teams /><RunDot $on /></DockSlot>
        <DockSlot><Firefox /><RunDot $on /></DockSlot>
        <DockSep $w={75} />
        <DockSlot><DocThumb /><RunDot /></DockSlot>
        <DockSlot><Trash /><RunDot /></DockSlot>
      </Dock>
    </Screen>
  );
}

export default App;
